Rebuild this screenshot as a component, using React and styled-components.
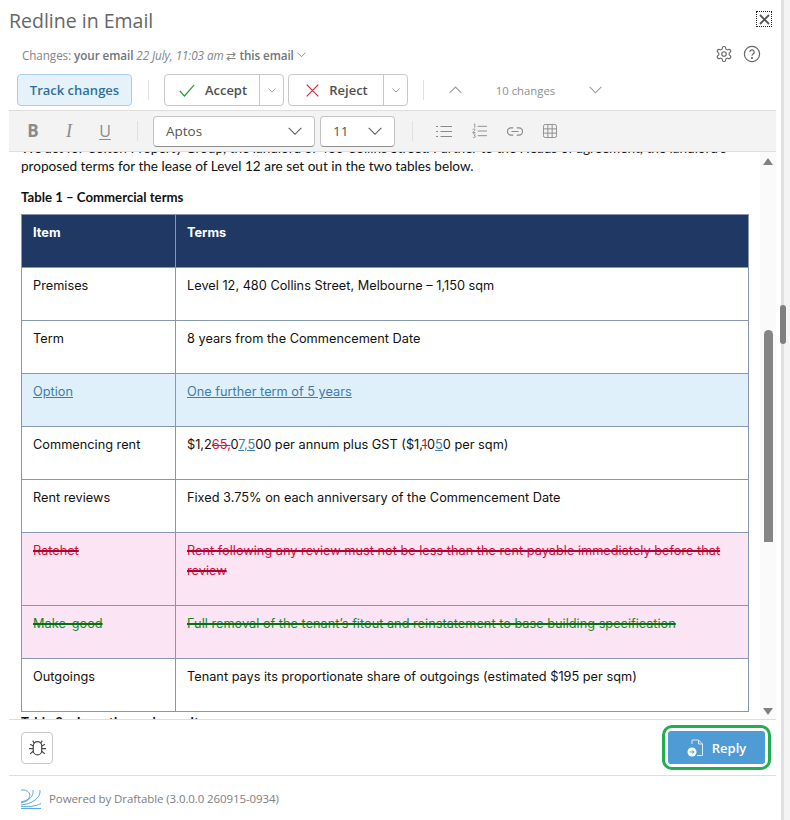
import React from "react";
import styled, { createGlobalStyle } from "styled-components";

const Global = createGlobalStyle`
  html, body { margin: 0; padding: 0; background: #fff; }
  #root { width: 790px; height: 820px; }
  * { box-sizing: border-box; }
`;
const UI = `"Open Sans", "Noto Sans", "Liberation Sans", sans-serif`;
const BODY = `Lato, "Noto Sans", "Liberation Sans", sans-serif`;
const CELL = `Inter, "Noto Sans", "Liberation Sans", sans-serif`;

const Page = styled.div`
  width: 790px; height: 820px; display: flex; overflow: hidden; background: #fff; font-family: ${UI};
`;
const Panel = styled.main`
  width: 767px; margin-left: 9px; display: flex; flex-direction: column; height: 820px;
`;
const Gutter = styled.div`
  position: relative; width: 9px; height: 820px; margin-left: 5px; border-left: 3px solid #e0e0e0; background: #f4f4f4;
`;
const OuterThumb = styled.div`
  position: absolute; left: -4px; top: 305px; width: 6px; height: 39px; background: #7f7f7f; border-radius: 3px;
`;
const TitleRow = styled.header`
  height: 40px; display: flex; align-items: center; justify-content: space-between; padding-right: 4px;
`;
const Title = styled.h1`
  margin: 0; font-size: 19.5px; font-weight: 400; color: #666;
`;
const CloseBox = styled.div`
  width: 16px; height: 16px; border: 1px dotted #222; color: #555; display: flex; align-items: center; justify-content: center; margin-top: -2px;
`;
const ChangesRow = styled.div`
  height: 30px; margin-bottom: 4px; display: flex; align-items: center; justify-content: space-between; padding: 0 15px 0 13px;
`;
const ChangesText = styled.div`
  font-size: 11.7px; letter-spacing: -0.08px; color: #80868c; display: flex; align-items: center; gap: 3px;
  b { font-weight: 600; color: #70757a; } i { font-style: italic; }
`;
const IconPair = styled.div`
  display: flex; gap: 10px; align-items: center; color: #666; margin-top: -2px;
`;
const ActionRow = styled.div`
  height: 37px; display: flex; align-items: flex-start; padding: 0 0 0 8px; border-bottom: 1px solid #dedede;
`;
const TrackBtn = styled.button`
  width: 115px; height: 32px; border: 1px solid #a5cfee; border-radius: 4px; background: #e6f2fa; color: #2f6f9f;
  font: 600 13px ${UI}; padding: 0;
`;
const Sep = styled.div`
  width: 1px; height: 20px; background: #e0e0e0; margin: ${p => p.$m || "6px 15px 6px 16px"};
`;
const SplitBtn = styled.div`
  display: flex; height: 32px; border: 1px solid #c8c8c8; border-radius: 4px; margin-right: 4px; background: #fff;
`;
const MainPart = styled.div`
  width: ${p => p.$w}px; display: flex; align-items: center; justify-content: center; gap: 10px; padding-left: 2px;
  font: 600 13px ${UI}; color: #4f4f4f;
`;
const ArrowPart = styled.div`
  width: 24px; border-left: 1px solid #c8c8c8; display: flex; align-items: center; justify-content: center; color: #777;
`;
const Nav = styled.div`
  display: flex; align-items: center; height: 32px; color: #999; margin-left: 9px;
`;
const NavCount = styled.span`
  width: 127px; text-align: center; font-size: 11.3px; color: #8a8f94;
`;
const FormatBar = styled.div`
  height: 41px; background: #f3f3f3; border-bottom: 1px solid #dedede; display: flex; align-items: center; padding-left: 16px; color: #8a8a8a;
`;
const FmtGlyph = styled.span`
  width: 16px; margin-right: ${p => p.$mr || 20}px; text-align: center; font: ${p => p.$f}; color: #8b8b8b;
  text-decoration: ${p => p.$u ? "underline" : "none"}; text-underline-offset: 2px; line-height: 20px;
`;
const Select = styled.div`
  width: ${p => p.$w}px; height: 31px; background: #fff; border: 1px solid #c4c4c4; border-bottom-color: #8f8f8f; border-radius: 4px;
  display: flex; align-items: center; justify-content: space-between; padding: 0 12px; font-size: 13.5px; color: #555; margin-right: 5px; flex: none;
`;
const ToolIcons = styled.div`
  display: flex; align-items: center; gap: 20px; color: #8a8a8a;
`;
const ScrollArea = styled.div`
  flex: 1; min-height: 0; display: flex; overflow: hidden;
`;
const Doc = styled.div`
  flex: 1; min-width: 0; overflow: hidden; padding: 0 0 0 12px; font: 13.6px/18px ${BODY}; color: #111;
`;
const Lead = styled.p`
  margin: -13px 0 0;
`;
const TableTitle = styled.p`
  margin: ${p => p.$mt}px 0 8px; font-weight: 700; font-size: 13.2px;
`;
const Sheet = styled.table`
  width: 728px; border-collapse: collapse; table-layout: fixed; font: 12.75px/20px ${CELL};
  td, th { border: 1px solid #8696b3; padding: 8px 11px 24px; vertical-align: top; text-align: left; }
`;
const Row = styled.tr`
  height: 53px;
  background: ${p => ({ head: "#1f3864", added: "#dff0fa", removed: "#fbe4f4" }[p.$k] || "#fff")};
  th { color: #fff; font-weight: 700; }
`;
const Ins = styled.span`
  color: #3f7cac; text-decoration: underline;
`;
const Del = styled.span`
  color: #d0123a; text-decoration: line-through; text-decoration-thickness: ${p => p.$heavy ? "1.5px" : "1px"};
  text-decoration-color: ${p => p.$heavy ? "#b00035" : "#d0123a"};
`;
const DelGreen = styled.span`
  color: #128a1f; text-decoration: line-through; text-decoration-thickness: 1.5px; text-decoration-color: #0a6e14;
`;
const Track = styled.div`
  width: 16px; background: #fafafa; display: flex; flex-direction: column; align-items: center; padding: 6px 0 4px;
`;
const TrackSpacer = styled.div`
  height: ${p => p.$h}px; flex: ${p => p.$h ? "none" : 1};
`;
const InnerThumb = styled.div`
  width: 9px; height: 212px; background: #858585; border-radius: 5px 5px 0 0;
`;
const Tri = styled.div`
  width: 0; height: 0; border-left: 5px solid transparent; border-right: 5px solid transparent;
  ${p => p.$down ? "border-top: 7px solid #808080;" : "border-bottom: 7px solid #808080;"}
`;
const Actions = styled.div`
  height: 57px; flex: none; border-top: 1px solid #dedede; border-bottom: 1px solid #dedede; display: flex; align-items: center; justify-content: space-between; padding: 0 5px 0 12px;
`;
const BugBtn = styled.button`
  width: 32px; height: 32px; border: 1px solid #c8c8c8; border-radius: 4px; background: #fff; color: #444; padding: 0; display: flex; align-items: center; justify-content: center;
`;
const ReplyRing = styled.div`
  border: 3px solid #22ad50; border-radius: 10px; padding: 3px;
`;
const ReplyBtn = styled.button`
  width: 97px; height: 33px; background: #4f9bd5; border: none; border-radius: 3px; color: #fff; font: 600 13px ${UI};
  display: flex; align-items: center; justify-content: center; gap: 8px; padding: 0;
`;
const Footer = styled.footer`
  height: 44px; flex: none; display: flex; align-items: center; gap: 8px; padding: 1px 0 0 12px; font-size: 11.5px; letter-spacing: -0.1px; color: #808080;
`;

const Chev = ({ s = 10, down = true, w = 1 }) => (
  <svg width={s} height={s * 0.6} viewBox="0 0 10 6" fill="none" stroke="currentColor" strokeWidth={w}>
    <path d={down ? "M.5.7 5 5.2 9.5.7" : "M.5 5.3 5 .8l4.500 4.500"} />
  </svg>
);

export default function App() {
  return (
    <Page>
      <Global />
      <Panel>
        <TitleRow>
          <Title>Redline in Email</Title>
          <CloseBox>
            <svg width="11" height="11" viewBox="0 0 11 11" stroke="currentColor" strokeWidth="1.8"><path d="M1 1l9 9M10 1l-9 9" /></svg>
          </CloseBox>
        </TitleRow>
        <ChangesRow>
          <ChangesText>
            <span>Changes: <b>your email</b> <i>22 July, 11:03 am</i> ⇄ <b>this email</b></span>
            <Chev s={9} />
          </ChangesText>
          <IconPair>
            <svg width="18" height="18" viewBox="0 0 24 24" fill="none" stroke="currentColor" strokeWidth="1.5">
              <path d="M12.220 2h-.44a2 2 0 0 0-2 2v.18a2 2 0 0 1-1 1.730l-.43.25a2 2 0 0 1-2 0l-.15-.08a2 2 0 0 0-2.730.73l-.22.38a2 2 0 0 0 .73 2.730l.15.1a2 2 0 0 1 1 1.720v.51a2 2 0 0 1-1 1.740l-.15.09a2 2 0 0 0-.73 2.730l.22.38a2 2 0 0 0 2.730.73l.15-.08a2 2 0 0 1 2 0l.43.25a2 2 0 0 1 1 1.730V20a2 2 0 0 0 2 2h.44a2 2 0 0 0 2-2v-.18a2 2 0 0 1 1-1.730l.43-.25a2 2 0 0 1 2 0l.15.08a2 2 0 0 0 2.730-.73l.22-.39a2 2 0 0 0-.73-2.730l-.15-.08a2 2 0 0 1-1-1.740v-.5a2 2 0 0 1 1-1.740l.15-.09a2 2 0 0 0 .73-2.730l-.22-.38a2 2 0 0 0-2.730-.73l-.15.08a2 2 0 0 1-2 0l-.43-.25a2 2 0 0 1-1-1.730V4a2 2 0 0 0-2-2z" />
              <circle cx="12" cy="12" r="3" />
            </svg>
            <svg width="18" height="18" viewBox="0 0 18 18" fill="none" stroke="currentColor" strokeWidth="1.2">
              <circle cx="9" cy="9" r="7.600" />
              <path d="M6.800 7.100a2.200 2.200 0 1 1 3.300 1.900c-.7.4-1.100.9-1.100 1.700" />
              <circle cx="9" cy="13" r=".5" fill="currentColor" />
            </svg>
          </IconPair>
        </ChangesRow>
        <ActionRow>
          <TrackBtn>Track changes</TrackBtn>
          <Sep />
          <SplitBtn>
            <MainPart $w={94}>
              <svg width="16" height="13" viewBox="0 0 16 13" fill="none" stroke="#2e9a3f" strokeWidth="1.2"><path d="M.8 7l4.600 5L15.200.8" /></svg>
              Accept
            </MainPart>
            <ArrowPart><Chev s={8} /></ArrowPart>
          </SplitBtn>
          <SplitBtn>
            <MainPart $w={94}>
              <svg width="13" height="13" viewBox="0 0 13 13" fill="none" stroke="#d92b3a" strokeWidth="1.2"><path d="M.7.7l11.600 11.600M12.300.7.7 12.300" /></svg>
              Reject
            </MainPart>
            <ArrowPart><Chev s={8} /></ArrowPart>
          </SplitBtn>
          <Sep $m="6px 16px 6px 11px" />
          <Nav>
            <Chev s={13} down={false} w={.8} />
            <NavCount>10 changes</NavCount>
            <Chev s={13} w={.8} />
          </Nav>
        </ActionRow>
        <FormatBar>
          <FmtGlyph $f={`700 17px ${UI}`}>B</FmtGlyph>
          <FmtGlyph $f={`italic 400 18px "Liberation Serif", serif`}>I</FmtGlyph>
          <FmtGlyph $f={`400 16px ${UI}`} $u $mr={24}>U</FmtGlyph>
          <Sep $m="0 15px 0 0" />
          <Select $w={162}>Aptos<Chev s={14} w={.75} /></Select>
          <Select $w={75}>11<Chev s={14} w={.75} /></Select>
          <Sep $m="0 23px 0 12px" />
          <ToolIcons>
            <svg width="16" height="13" viewBox="0 0 16 13" fill="none" stroke="currentColor"><path d="M0 1.500h2M4.500 1.500h11.500M0 6.500h2M4.500 6.500h11.500M0 11.500h2M4.500 11.500h11.500" /></svg>
            <svg width="15" height="16" viewBox="0 0 16 16" fill="none" stroke="currentColor"><path d="M6 3h10M6 8h10M6 13h10" /><path strokeWidth=".9" d="M2 .8l1-.3v4M.8 6.500c.3-1 2.600-1 2.600.2 0 1-2.400 1.600-2.600 3h2.800M1 11.300c1-.6 2.500-.3 2.400.8 0 .6-.6.9-1.200.9.7 0 1.400.3 1.400 1 0 1.100-1.700 1.400-2.700.7" /></svg>
            <svg width="16" height="9" viewBox="0 0 18 10" fill="none" stroke="currentColor" strokeWidth="1.3"><path d="M7 1H4.500a4 4 0 0 0 0 8H7M11 1h2.500a4 4 0 0 1 0 8H11M5 5h8" /></svg>
            <svg width="14" height="14" viewBox="0 0 15 15" fill="none" stroke="currentColor"><rect x=".5" y=".5" width="14" height="14" rx="2" /><path d="M5.200.5v14M9.800.5v14M.5 5.200h14M.5 9.800h14" /></svg>
          </ToolIcons>
        </FormatBar>
        <ScrollArea>
          <Doc>
            <Lead>We act for Colton Property Group, the landlord of 480 Collins Street. Further to the Heads of agreement, the landlord’s proposed terms for the lease of Level 12 are set out in the two tables below.</Lead>
            <TableTitle $mt={13}>Table 1 – Commercial terms</TableTitle>
            <Sheet>
              <colgroup><col style={{ width: 154 }} /><col /></colgroup>
              <tbody>
                <Row $k="head"><th>Item</th><th>Terms</th></Row>
                <Row><td>Premises</td><td>Level 12, 480 Collins Street, Melbourne – 1,150 sqm</td></Row>
                <Row><td>Term</td><td>8 years from the Commencement Date</td></Row>
                <Row $k="added"><td><Ins>Option</Ins></td><td><Ins>One further term of 5 years</Ins></td></Row>
                <Row><td>Commencing rent</td><td>$1,2<Del>65,</Del>0<Ins>7,5</Ins>00 per annum plus GST ($1,<Del>1</Del>0<Ins>5</Ins>0 per sqm)</td></Row>
                <Row><td>Rent reviews</td><td>Fixed 3.75% on each anniversary of the Commencement Date</td></Row>
                <Row $k="removed"><td><Del $heavy>Ratchet</Del></td><td><Del $heavy>Rent following any review must not be less than the rent payable immediately before that review</Del></td></Row>
                <Row $k="removed"><td><DelGreen>Make-good</DelGreen></td><td><DelGreen>Full removal of the tenant’s fitout and reinstatement to base building specification</DelGreen></td></Row>
                <Row><td>Outgoings</td><td>Tenant pays its proportionate share of outgoings (estimated $195 per sqm)</td></Row>
              </tbody>
            </Sheet>
            <TableTitle $mt={1}>Table 2 – Incentive and security</TableTitle>
          </Doc>
          <Track>
            <Tri />
            <TrackSpacer $h={165} />
            <InnerThumb />
            <TrackSpacer />
            <Tri $down />
          </Track>
        </ScrollArea>
        <Actions>
          <BugBtn>
            <svg width="19" height="19" viewBox="0 0 18 18" fill="none" stroke="currentColor" strokeWidth="1.100">
              <rect x="5" y="3.500" width="8" height="12.500" rx="4" />
              <path d="M6 5 4.500 2.500M12 5l1.500-2.500M5 7.500 2 6M13 7.500 16 6M5 10H1M13 10h4M5 12.500l-3 2.500M13 12.500l3 2.500" />
            </svg>
          </BugBtn>
          <ReplyRing>
            <ReplyBtn>
              <svg width="17" height="18" viewBox="0 0 17 18" fill="none">
                <path d="M5 5V1h6.500L15.500 5v11.500H10M11.500 1v4h4" stroke="#dcebf7" strokeWidth="1" />
                <circle cx="5" cy="13" r="4.500" fill="#fff" />
                <path d="M2.800 13h4.200M5.500 11.300 7.200 13l-1.700 1.700" stroke="#4f9bd5" strokeWidth="1" />
              </svg>
              Reply
            </ReplyBtn>
          </ReplyRing>
        </Actions>
        <Footer>
          <svg width="20" height="20" viewBox="0 0 20 20" fill="none" stroke="#5aa6e6" strokeWidth="1">
            <path d="M0 1h3c5 1 7 4 5 8-1 2-4 3-8 4M12 1c1 6-4 11-12 13M19 1c1 8-8 14-19 15M0 17.500c7 .5 14 0 20-3M0 19.500h20" />
          </svg>
          <span>Powered by Draftable (3.0.0.0 260915-0934)</span>
        </Footer>
      </Panel>
      <Gutter><OuterThumb /></Gutter>
    </Page>
  );
}
